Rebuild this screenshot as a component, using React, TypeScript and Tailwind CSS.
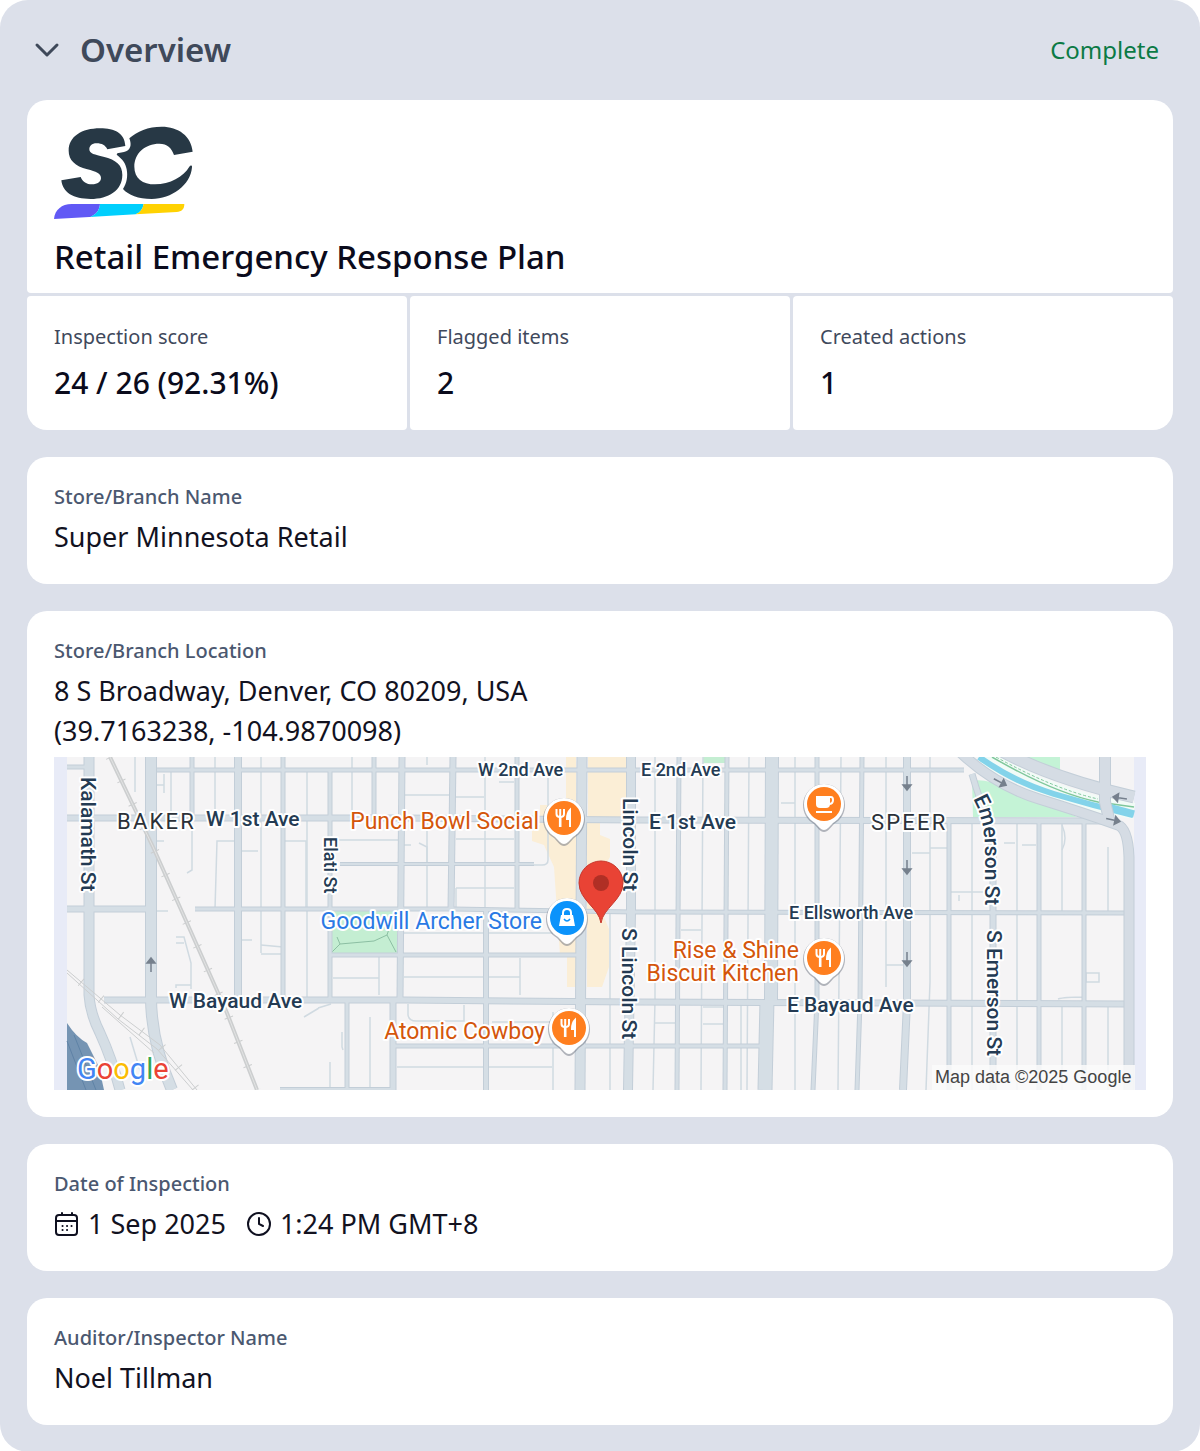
import { useState, type ReactNode } from 'react';

type Point = [number, number];

const MAIN_ROADS: { d: string; width: number }[] = [
  // vertical streets
  { d: 'M35 0V238Q36 256 46 276Q58 302 66 333', width: 10 },
  { d: 'M97 0V240Q97 285 118 333', width: 11 },
  { d: 'M138 0V62', width: 4 },
  { d: 'M184 0V243', width: 7 },
  { d: 'M229 0V243', width: 4 },
  { d: 'M276 14V243', width: 4 },
  { d: 'M293 243V333', width: 4 },
  { d: 'M320 0V62', width: 4 },
  { d: 'M348 0L346 243', width: 6 },
  { d: 'M339 243V333', width: 6 },
  { d: 'M399 0L397 153', width: 6 },
  { d: 'M432 153V333', width: 5 },
  { d: 'M463 0V153', width: 4 },
  { d: 'M528 0L526 333', width: 10 },
  { d: 'M577 0V155L574 333', width: 9 },
  { d: 'M625 0L623 333', width: 4 },
  { d: 'M673 0L671 333', width: 4 },
  { d: 'M718 0L717 243', width: 13 },
  { d: 'M713 243L711 333', width: 14 },
  { d: 'M763 0V243L759 333', width: 4 },
  { d: 'M808 0L806 245L803 333', width: 4 },
  { d: 'M853 0V245L849 333', width: 7 },
  { d: 'M895 66V333', width: 4 },
  { d: 'M918 17Q926 45 934 62L939 100V333', width: 6 },
  { d: 'M985 66V333', width: 4 },
  { d: 'M1030 66V333', width: 4 },
  // horizontal avenues
  { d: 'M13 10H31', width: 4 },
  { d: 'M103 13H910', width: 4 },
  { d: 'M13 61H350L580 63L1060 64', width: 6 },
  { d: 'M13 152H97', width: 6 },
  { d: 'M141 152H400L580 155L1074 156', width: 4 },
  { d: 'M50 243H350L580 245L1074 247', width: 6 },
  { d: 'M286 107H480', width: 3 },
  { d: 'M276 198H526', width: 4 },
  { d: 'M339 289H710', width: 4 },
  { d: 'M226 332H339', width: 3 },
];

const MINOR_ROADS = [
  'M81 0V35M117 13V60M138 62V113L133 116M161 0V60M207 0V196M253 14V243M298 0V58M373 0V8M373 62V153',
  'M431 0V153M494 14V103Q494 108 488 108H463M350 38H396M398 40H430M285 83H344M402 82H460M402 131H460M402 131V153',
  'M349 176H430M434 176H523M279 221H325M325 200V238M350 220H466M466 201V220M466 220V238M343 310H498M499 255V333M438 265H522',
  'M354 247V258Q355 264 362 264H410V248M316 260V333M288 275V290L289 293M276 305V333M250 260L265 251M264 251L277 247',
  'M161 152L163 84H184M229 84H252V152M188 94H204M188 183H198M207 188L229 190M207 197H229M97 154H114',
  'M122 180H130L137 206V232M122 186H130M122 231V228H137M103 28L110 28V17V36M103 84H110M76 280L88 320',
  'M601 0V243L599 333M649 0L647 333M695 0L693 333M687 243V333M741 0V333M787 0L784 333M556 155V333M627 173H647',
  'M600 266H623M649 250H670M649 267H671M727 46H741M832 0V230M876 0V225L872 333M918 66V333M963 66V333M1008 66V155',
  'M1054 90V155M1008 250V333M1054 250V333M858 96H876M876 91H895M832 208H850M950 86H961M968 88H982M897 135H930M905 138V144',
  'M1031 247V225M1004 242Q1010 240 1031 240M1032 216H1045V225H1032ZM1008 68Q1014 82 1008 93M350 88H357M365 86L373 90V107M445 25H460',
];

const DOWN_ARROWS: { at: Point; angle: number }[] = [
  { at: [853, 26], angle: 0 },
  { at: [853, 110], angle: 0 },
  { at: [853, 202], angle: 0 },
  { at: [97, 208], angle: 180 },
  { at: [946, 25], angle: -62 },
  { at: [1059, 63], angle: -78 },
  { at: [1066, 41], angle: 98 },
];

function Street({ x, y, rotate, small, children }: { x: number; y: number; rotate?: boolean; small?: boolean; children: ReactNode }) {
  return (
    <text
      transform={rotate ? `translate(${x} ${y}) rotate(90)` : `translate(${x} ${y})`}
      className={`fill-[#243b53] stroke-white stroke-4 font-medium ${small ? 'text-[18px]' : 'text-[21px]'}`}
      paintOrder="stroke"
      strokeLinejoin="round"
    >
      {children}
    </text>
  );
}

function District({ x, y, children }: { x: number; y: number; children: ReactNode }) {
  return (
    <text
      x={x}
      y={y}
      className="fill-[#2b3138] stroke-white stroke-4 text-[22px] tracking-widest"
      paintOrder="stroke"
      strokeLinejoin="round"
    >
      {children}
    </text>
  );
}

function Place({ x, y, blue, children }: { x: number; y: number; blue?: boolean; children: ReactNode }) {
  return (
    <text
      x={x}
      y={y}
      textAnchor="end"
      className={`${blue ? 'fill-[#2a7ae4]' : 'fill-[#d4560b]'} stroke-white stroke-4 text-[23px]`}
      paintOrder="stroke"
      strokeLinejoin="round"
    >
      {children}
    </text>
  );
}

function Marker({ x, y, kind }: { x: number; y: number; kind: 'food' | 'cafe' | 'shop' }) {
  return (
    <g transform={`translate(${x} ${y})`}>
      <path
        d="M0 28C-4 28 -6 24 -10 20C-17 16 -21 9 -21 1A21 21 0 0 1 21 1C21 9 17 16 10 20C6 24 4 28 0 28Z"
        fill="#6b7280"
        opacity=".5"
      />
      <path d="M0 26C-3 26 -5 23 -9 19C-16 15 -20 8 -20 0A20 20 0 0 1 20 0C20 8 16 15 9 19C5 23 3 26 0 26Z" fill="#fff" />
      <circle r="17" fill={kind === 'shop' ? '#0b93fb' : '#ff7f1f'} />
      {kind === 'food' && (
        <g fill="none" stroke="#fff" strokeWidth="2">
          <path d="M-7.500 -9V-4Q-7.500 -1 -4 -1Q0 -1 0 -4V-9M-3.800 -9V-2" />
          <path d="M-3.800 -2V9" strokeWidth="2.600" />
          <path d="M6 9V-8Q3 -5 3 1H6Z" fill="#fff" />
        </g>
      )}
      {kind === 'cafe' && (
        <g>
          <path d="M-8 -8H6V0Q6 4 2 4H-4Q-8 4 -8 0Z" fill="#fff" />
          <path d="M5 -7H7Q9 -7 9 -4Q9 0 5 0" fill="none" stroke="#fff" strokeWidth="2" />
          <path d="M-8 8H8" stroke="#fff" strokeWidth="2" />
        </g>
      )}
      {kind === 'shop' && (
        <g>
          <path d="M-6 -3H6L8 8H-8Z" fill="#fff" />
          <path d="M-4 -2V-5Q-4 -9 0 -9Q4 -9 4 -5V-2" fill="none" stroke="#fff" strokeWidth="2" />
          <path d="M-3 1Q0 5 3 1" fill="none" stroke="#0b93fb" strokeWidth="1.500" />
        </g>
      )}
    </g>
  );
}

function LocationMap() {
  return (
    <svg viewBox="0 0 1092 333" role="img" aria-label="Map of the store location" className="block w-full font-['Roboto',sans-serif]">
      <rect width="1092" height="333" fill="#e8ebf7" />
      <rect x="13" width="1067" height="333" fill="#f5f4f5" />

      {/* commercial strip along Broadway */}
      <path
        d="M534 0H573V60H534ZM512 0H522V60H512ZM486 48H522V198H506L500 110L490 88L478 84V68H486ZM513 200H522V230H513ZM533 66H546V78L556 82V100L550 110V160L555 172V210L548 230H533Z"
        fill="#fbeed6"
      />
      <path d="M277 154H343V196H277Z" fill="#c4eed2" />
      <path d="M278 195L286 187L283 180M286 187L320 184L333 178L342 195M333 178L335 172" stroke="#8cbfa3" fill="none" />
      <path d="M649 0H673V6H649Z" fill="#c4eed2" />
      <path d="M918 23Q940 22 970 38L1023 60H919Z" fill="#c4f3d6" />
      <path d="M966 0H1006V20L985 10Z" fill="#c4f3d6" />
      <path d="M13 266Q22 280 33 286L45 310L50 333H13Z" fill="#7594b3" />
      <path d="M13 284L32 333M20 278L42 333" stroke="#5f82a6" fill="none" />

      <g fill="none" stroke="#d0dae1" strokeWidth="1.500">
        {MINOR_ROADS.map((d) => (
          <path key={d} d={d} />
        ))}
      </g>
      <g fill="none" stroke="#c3ced8">
        {MAIN_ROADS.map((road) => (
          <path key={road.d} d={road.d} strokeWidth={road.width + 1} />
        ))}
      </g>
      <g fill="none" stroke="#d5dee5">
        {MAIN_ROADS.map((road) => (
          <path key={road.d} d={road.d} strokeWidth={road.width - 1} />
        ))}
      </g>

      {/* creek and the parkway on both banks */}
      <g fill="none">
        <path d="M930 0Q1000 42 1080 54" stroke="#f2fbf7" strokeWidth="16" />
        <path d="M938 0Q1000 36 1044 45L1080 50" stroke="#7fc79b" strokeWidth="1.500" />
        <path d="M942 0Q1000 32 1044 42" stroke="#7fc79b" strokeDasharray="3 2" />
        <path d="M925 0Q960 25 1000 37T1079 58" stroke="#83d3ea" strokeWidth="6" />
        <path d="M1054 50L1080 57" stroke="#83d3ea" strokeWidth="7" />
        <path d="M948 -6Q1000 22 1080 40" stroke="#c3ced8" strokeWidth="13" />
        <path d="M905 -6Q940 28 985 42T1064 68Q1074 72 1075 100V333" stroke="#c3ced8" strokeWidth="11" />
        <path d="M1051 0V45L1056 66" stroke="#c3ced8" strokeWidth="12" />
        <path d="M948 -6Q1000 22 1080 40" stroke="#d5dce4" strokeWidth="11" />
        <path d="M905 -6Q940 28 985 42T1064 68Q1074 72 1075 100V333" stroke="#d5dce4" strokeWidth="9" />
        <path d="M1051 0V45L1056 66" stroke="#d5dce4" strokeWidth="10" />
      </g>

      {/* railway */}
      <g fill="none" stroke="#cccecf">
        <path d="M56 0L99 90L133 166L173 256L203 333" strokeWidth="4" />
        <path d="M56 0L99 90L133 166L173 256L203 333" strokeWidth="9" strokeDasharray="1 25" />
        <path d="M56 0L99 90L133 166L173 256L203 333" stroke="#e2e3e3" strokeWidth="1" />
        <path d="M13 213L66 258L106 288L143 333M13 216L64 262L103 292L139 333" />
        <path d="M16 216L66 258L106 288L143 333" strokeWidth="9" strokeDasharray="1 25" strokeDashoffset="12" />
        <path d="M48 250L100 296" />
      </g>

      {DOWN_ARROWS.map(({ at, angle }) => (
        <path
          key={at.join()}
          d="M0 -7V5M-4 2L0 7L4 2Z"
          transform={`translate(${at[0]} ${at[1]}) rotate(${angle})`}
          fill="#76808d"
          stroke="#76808d"
          strokeWidth="1.500"
        />
      ))}

      <Street x={424} y={19} small>W 2nd Ave</Street>
      <Street x={587} y={19} small>E 2nd Ave</Street>
      <Street x={152} y={69}>W 1st Ave</Street>
      <Street x={595} y={72}>E 1st Ave</Street>
      <Street x={735} y={162} small>E Ellsworth Ave</Street>
      <Street x={115} y={251}>W Bayaud Ave</Street>
      <Street x={733} y={255}>E Bayaud Ave</Street>
      <Street x={27} y={20} rotate>Kalamath St</Street>
      <Street x={270} y={80} rotate small>Elati St</Street>
      <Street x={569} y={41} rotate>Lincoln St</Street>
      <Street x={568} y={171} rotate>S Lincoln St</Street>
      <Street x={933} y={173} rotate>S Emerson St</Street>
      <path id="emerson" d="M919 42Q931 62 931 95V190" fill="none" />
      <text className="fill-[#243b53] stroke-white stroke-4 text-[21px] font-medium" paintOrder="stroke" strokeLinejoin="round">
        <textPath href="#emerson">Emerson St</textPath>
      </text>

      <District x={63} y={72}>BAKER</District>
      <District x={817} y={73}>SPEER</District>

      <Place x={485} y={72}>Punch Bowl Social</Place>
      <Place x={488} y={172} blue>Goodwill Archer Store</Place>
      <Place x={491} y={282}>Atomic Cowboy</Place>
      <Place x={745} y={201}>
        Rise &amp; Shine
        <tspan x="745" dy="23">Biscuit Kitchen</tspan>
      </Place>

      <Marker x={510} y={61} kind="food" />
      <Marker x={513} y={161} kind="shop" />
      <Marker x={515} y={271} kind="food" />
      <Marker x={770} y={47} kind="cafe" />
      <Marker x={770} y={201} kind="food" />

      <path d="M547 166C545 151 525 143 525 126A22 22 0 0 1 569 126C569 143 549 151 547 166Z" fill="#e94335" stroke="#c8362b" />
      <circle cx="547" cy="126" r="8" fill="#b02f25" />

      <text x="23" y="322" className="stroke-white stroke-4 text-[29px]" paintOrder="stroke" strokeLinejoin="round">
        <tspan fill="#4285f4">G</tspan>
        <tspan fill="#ea4335">o</tspan>
        <tspan fill="#fbbc04">o</tspan>
        <tspan fill="#4285f4">g</tspan>
        <tspan fill="#34a853">l</tspan>
        <tspan fill="#ea4335">e</tspan>
      </text>
      <rect x="878" y="308" width="203" height="25" fill="#fafafa" opacity=".85" />
      <text x="881" y="326" className="fill-[#444] font-['Liberation_Sans',Arial,sans-serif] text-[18px]">
        Map data ©2025 Google
      </text>
    </svg>
  );
}

function BrandLogo() {
  return (
    <svg viewBox="162 378 420 282" role="img" aria-label="SC" className="block h-[94px] w-[140px]">
      <g fill="#273845">
        <path d="M376 438L322 448C316 436 306 430 290 430C275 430 268 438 268 448C268 462 285 464 310 470C350 480 367 495 367 525C367 572 325 597 272 597C220 597 188 578 184 541L242 531C248 546 260 553 276 553C293 553 303 545 303 534C303 520 288 515 262 508C225 498 206 480 206 452C206 410 245 385 300 385C345 385 374 400 376 438Z" />
        <path d="M388 415C410 394 445 380 485 380C535 380 574 408 578 455L522 465C514 443 502 431 478 431C435 431 403 460 403 500C403 535 428 553 465 553C510 553 550 530 568 500C571 495 577 495 576 502C572 555 515 597 455 597C415 597 385 585 369 567C380 550 384 530 380 508C377 490 368 478 350 464L352 460L372 456C392 452 396 435 388 415Z" />
      </g>
      <path d="M162 657C164 630 185 612 215 612H300C298 632 288 645 268 651Z" fill="#6159f5" />
      <path d="M300 612H431C428 628 420 638 407 643L268 651C288 645 298 632 300 612Z" fill="#00cffd" />
      <path d="M431 612H553C553 628 545 635 530 636L407 643C420 638 428 628 431 612Z" fill="#ffd202" />
    </svg>
  );
}

function CalendarIcon() {
  return (
    <svg viewBox="0 0 26 26" className="size-[26px]" fill="none" stroke="#0f1020" strokeWidth="2" strokeLinecap="round">
      <rect x="2" y="4" width="21" height="20" rx="3" />
      <path d="M2 10H23M8 2V4M18 2V4" />
      <path d="M8.500 15H8.600M13 15H13.100M17.500 15H17.600M8.500 19H8.600M13 19H13.100" />
    </svg>
  );
}

function ClockIcon() {
  return (
    <svg viewBox="0 0 26 26" className="size-[26px]" fill="none" stroke="#0f1020" strokeWidth="2" strokeLinecap="round">
      <circle cx="13" cy="13" r="11" />
      <path d="M13 7V13L17 15" />
    </svg>
  );
}

function Stat({ label, value, className }: { label: string; value: string; className?: string }) {
  return (
    <div className={`rounded-sm bg-white p-[27px] ${className ?? ''}`}>
      <dt className="text-[20px] leading-[28px] text-[#3f495c]">{label}</dt>
      <dd className="mt-3 text-[30px] leading-[40px] font-medium text-[#0b0b1c]">{value}</dd>
    </div>
  );
}

function Field({ label, children }: { label: string; children: ReactNode }) {
  return (
    <section className="rounded-[20px] bg-white px-[27px] pt-[26px] pb-[27px]">
      <h3 className="text-[20px] leading-[28px] font-medium text-[#4b5870]">{label}</h3>
      <div className="mt-1.5 text-[27px] leading-[40px] text-[#12121f]">{children}</div>
    </section>
  );
}

export default function App() {
  const [open, setOpen] = useState(true);

  return (
    <main className="rounded-[28px] bg-[#dce0ea] px-[27px] pb-[27px] font-['Noto_Sans',sans-serif]">
      <header className="flex h-[100px] items-center justify-between pr-[14px] pl-[7px]">
        <button type="button" aria-expanded={open} onClick={() => setOpen(!open)} className="flex items-center gap-5">
          <svg viewBox="0 0 26 26" className="size-[26px]" fill="none" stroke="#3f495a" strokeWidth="3" strokeLinecap="round" strokeLinejoin="round">
            <path d="M3 8L13 18L23 8" />
          </svg>
          <span className="text-[33px] leading-[44px] font-semibold text-[#3f495a]">Overview</span>
        </button>
        <span className="text-[24px] text-[#0b7a45]">Complete</span>
      </header>

      {open && (
        <div className="flex flex-col gap-[27px]">
          <div className="flex flex-col gap-[3px]">
            <div className="rounded-t-[20px] rounded-b-sm bg-white px-[27px] pt-[26px] pb-[14px]">
              <BrandLogo />
              <h2 className="mt-[15px] text-[33px] leading-[44px] font-medium text-[#0b0b1c]">Retail Emergency Response Plan</h2>
            </div>
            <dl className="grid grid-cols-3 gap-[3px]">
              <Stat label="Inspection score" value="24 / 26 (92.31%)" className="rounded-bl-[20px]" />
              <Stat label="Flagged items" value="2" />
              <Stat label="Created actions" value="1" className="rounded-br-[20px]" />
            </dl>
          </div>

          <Field label="Store/Branch Name">Super Minnesota Retail</Field>

          <Field label="Store/Branch Location">
            <p>8 S Broadway, Denver, CO 80209, USA</p>
            <p className="mb-1.5">(39.7163238, -104.9870098)</p>
            <LocationMap />
          </Field>

          <Field label="Date of Inspection">
            <div className="flex items-center gap-5">
              <span className="flex items-center gap-2">
                <CalendarIcon />
                1 Sep 2025
              </span>
              <span className="flex items-center gap-2">
                <ClockIcon />
                1:24 PM GMT+8
              </span>
            </div>
          </Field>

          <Field label="Auditor/Inspector Name">Noel Tillman</Field>
        </div>
      )}
    </main>
  );
}
